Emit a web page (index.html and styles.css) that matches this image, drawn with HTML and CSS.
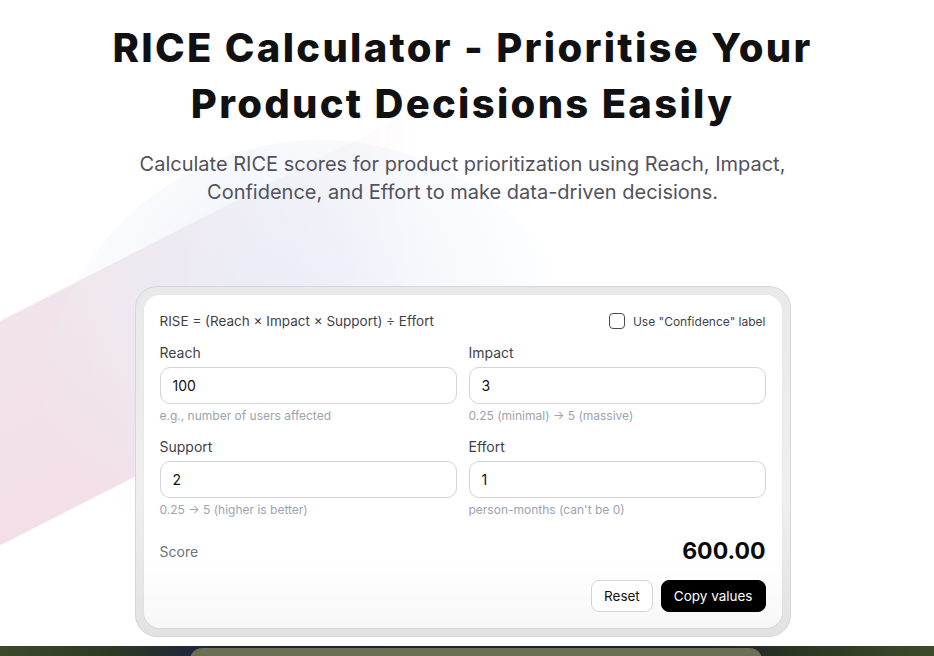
FILE: index.html
```html
<!DOCTYPE html>
<html lang="en">
<head>
<meta charset="utf-8">
<title>RICE Calculator</title>
<link rel="stylesheet" href="styles.css">
</head>
<body>
<div class="bg-deco"></div>
<main class="page">
  <header class="hero">
    <h1 class="hero-title">RICE Calculator - Prioritise Your Product Decisions Easily</h1>
    <p class="hero-sub">Calculate RICE scores for product prioritization using Reach, Impact, Confidence, and Effort to make data-driven decisions.</p>
  </header>

  <section class="shell">
    <div class="card">
      <div class="card-top">
        <span class="formula">RISE = (Reach × Impact × Support) ÷ Effort</span>
        <label class="check">
          <span class="check-box"></span>
          <span class="check-text">Use "Confidence" label</span>
        </label>
      </div>

      <div class="grid">
        <div class="field">
          <span class="field-label">Reach</span>
          <div class="input">100</div>
          <span class="hint">e.g., number of users affected</span>
        </div>
        <div class="field">
          <span class="field-label">Impact</span>
          <div class="input">3</div>
          <span class="hint">0.25 (minimal) → 5 (massive)</span>
        </div>
        <div class="field">
          <span class="field-label">Support</span>
          <div class="input">2</div>
          <span class="hint">0.25 → 5 (higher is better)</span>
        </div>
        <div class="field">
          <span class="field-label">Effort</span>
          <div class="input">1</div>
          <span class="hint">person-months (can't be 0)</span>
        </div>
      </div>

      <div class="score-row">
        <span class="score-label">Score</span>
        <span class="score-value">600.00</span>
      </div>

      <div class="actions">
        <button class="btn btn-outline">Reset</button>
        <button class="btn btn-dark">Copy values</button>
      </div>
    </div>
  </section>

  <div class="strip"><div class="strip-panel"></div></div>
</main>
</body>
</html>
```

FILE: styles.css
```css
* { box-sizing: border-box; }

html, body {
  margin: 0;
  padding: 0;
  background: #ffffff;
  overflow: hidden;
}

body {
  font-family: "Inter", "Noto Sans", sans-serif;
  color: #111111;
  position: relative;
  min-height: 656px;
}

.bg-deco {
  position: absolute;
  inset: 0;
  pointer-events: none;
  z-index: 0;
  overflow: hidden;
}

.bg-deco::before {
  content: "";
  position: absolute;
  inset: 0;
  background:
    linear-gradient(153deg,
      rgba(255,255,255,0) 0,
      rgba(255,255,255,0) 285px,
      rgba(241,226,234,0.95) 287px,
      rgba(242,221,230,0.95) 485px,
      rgba(255,255,255,0) 487px);
  -webkit-mask-image: linear-gradient(90deg, #000 0, #000 170px, rgba(0,0,0,0.4) 300px, rgba(0,0,0,0) 420px);
  mask-image: linear-gradient(90deg, #000 0, #000 170px, rgba(0,0,0,0.4) 300px, rgba(0,0,0,0) 420px);
}

.bg-deco::after {
  content: "";
  position: absolute;
  left: 40px;
  top: 140px;
  width: 560px;
  height: 560px;
  border-radius: 50%;
  background: radial-gradient(circle at 45% 30%, rgba(228,236,248,0.75) 0, rgba(234,240,249,0.45) 30%, rgba(255,255,255,0) 55%);
}

.page {
  position: relative;
  z-index: 1;
  padding-right: 9px;
  display: flex;
  flex-direction: column;
  align-items: center;
}

.hero {
  padding-top: 20px;
  text-align: center;
  width: 800px;
}

.hero-title {
  margin: 0;
  font-size: 40px;
  line-height: 56px;
  font-weight: 800;
  color: #111113;
  letter-spacing: 2.3px;
}

.hero-sub {
  margin: 18px auto 0;
  width: 700px;
  font-size: 20px;
  line-height: 28px;
  color: #52525b;
  font-weight: 400;
}

.shell {
  margin-top: 80px;
  width: 656px;
  padding: 8px;
  border-radius: 22px;
  border: 1px solid #d6d6d8;
  background: linear-gradient(180deg, #e9e9eb 0%, #efefef 60%, #e2e2e2 100%);
}

.card {
  background: linear-gradient(180deg, #ffffff 0%, #ffffff 80%, #f7f7f7 100%);
  border-radius: 16px;
  padding: 16px;
  box-shadow: 0 1px 2px rgba(0,0,0,0.06);
}

.card-top {
  display: flex;
  justify-content: space-between;
  align-items: center;
  height: 20px;
}

.formula {
  font-size: 13.5px;
  color: #3f3f46;
}

.check {
  display: flex;
  align-items: center;
  gap: 8px;
}

.check-box {
  width: 16px;
  height: 16px;
  border: 1.5px solid #4b4b4b;
  border-radius: 4px;
  background: #fff;
}

.check-text {
  font-size: 12px;
  color: #3f3f46;
}

.grid {
  margin-top: 12px;
  display: grid;
  grid-template-columns: 1fr 1fr;
  column-gap: 12px;
  row-gap: 13px;
}

.field {
  display: flex;
  flex-direction: column;
}

.field-label {
  font-size: 14px;
  line-height: 20px;
  color: #3f3f46;
}

.input {
  margin-top: 4px;
  height: 37px;
  border: 1px solid #d4d4d8;
  border-radius: 10px;
  padding: 0 12px;
  display: flex;
  align-items: center;
  font-size: 14px;
  color: #111111;
  background: #fff;
}

.hint {
  margin-top: 4px;
  font-size: 12px;
  line-height: 16px;
  color: #9ca3af;
}

.score-row {
  margin-top: 18px;
  height: 30px;
  display: flex;
  justify-content: space-between;
  align-items: center;
}

.score-label {
  font-size: 14px;
  color: #6b7280;
}

.score-value {
  font-size: 23px;
  font-weight: 700;
  color: #0a0a0a;
}

.actions {
  margin-top: 14px;
  display: flex;
  justify-content: flex-end;
  gap: 8px;
}

.btn {
  height: 32px;
  padding: 0 12px;
  border-radius: 8px;
  font-family: "Inter", "Noto Sans", sans-serif;
  font-size: 13.5px;
  cursor: pointer;
}

.btn-outline {
  background: #fff;
  border: 1px solid #d4d4d8;
  color: #111;
}

.btn-dark {
  background: #000;
  border: 1px solid #000;
  color: #fff;
}

.strip {
  margin-top: 9px;
  width: 934px;
  margin-right: -9px;
  height: 40px;
  background: linear-gradient(90deg, #3b4a2b 0, #2c3a22 12%, #1e2440 22%, #1a2038 75%, #2a3620 85%, #3d4b2b 100%);
}

.strip-panel {
  margin-left: 190px;
  margin-top: 2px;
  width: 572px;
  height: 38px;
  border-radius: 12px 12px 0 0;
  background: #6a6f56;
}
```
